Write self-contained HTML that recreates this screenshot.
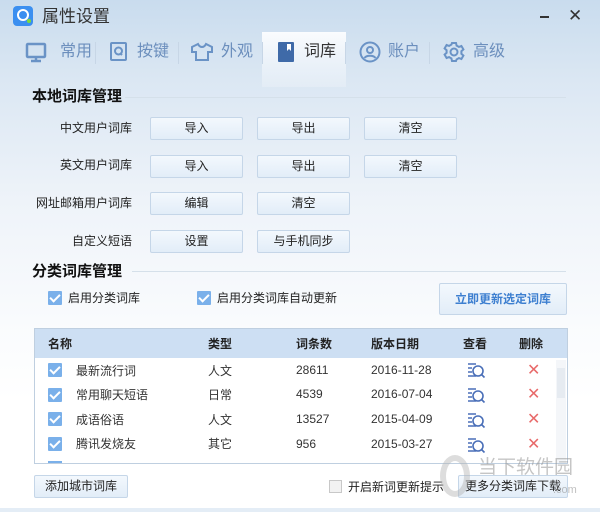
<!DOCTYPE html>
<html><head><meta charset="utf-8"><style>
*{margin:0;padding:0;box-sizing:border-box}
body{width:600px;height:512px;overflow:hidden;font-family:"Liberation Sans","Noto Sans CJK SC",sans-serif;font-size:12px;line-height:14px;color:#222;position:relative;
background:linear-gradient(180deg,#c9dcee 0px,#dbe7f3 80px,#eef3f9 200px,#f9fbfd 320px,#fff 400px)}
.a{position:absolute}
.btn{position:absolute;width:93px;height:23px;border:1px solid #c5d6e8;background:linear-gradient(#f3f8fd,#e2edf8);text-align:center;line-height:21px;font-size:12px;color:#222;border-radius:2px}
.lbl{position:absolute;right:468px;font-size:12px;color:#222}
.tab{position:absolute;top:44px;font-size:16px;line-height:16px;color:#6c8fbd}
.sep{position:absolute;top:42px;width:1px;height:22px;background:#c7d6e6}
.h{position:absolute;font-size:15px;line-height:15px;font-weight:bold;color:#111}
.cb{position:absolute;width:14px;height:14px;background:#7ab0ea;border-radius:1px}
.cb:after{content:"";position:absolute;left:4px;top:1px;width:4px;height:8px;border:solid #fff;border-width:0 2px 2px 0;transform:rotate(45deg)}
.th{position:absolute;top:337px;font-weight:bold;font-size:12px}
.td{position:absolute;font-size:12px;color:#333}
.x{position:absolute;color:#e86a6a;font-size:16px;line-height:16px;left:527px}
</style></head><body>
<div class="a" style="left:13px;top:6px;width:20px;height:20px;border-radius:4px;background:#3b8ff0"></div>
<div class="a" style="left:17px;top:9px;width:12px;height:12px;border:2.5px solid #fff;border-radius:50%"></div>
<div class="a" style="left:27px;top:19px;width:4px;height:4px;background:#7ddc3a;border-radius:50%"></div>
<div class="a" style="left:42px;top:8px;font-size:17px;line-height:17px;color:#333">属性设置</div>
<div class="a" style="left:540px;top:16px;width:9px;height:2px;background:#333"></div>
<div class="a" style="left:568px;top:7px;font-size:17px;line-height:17px;color:#333">✕</div>

<div class="a" style="left:262px;top:32px;width:84px;height:55px;background:linear-gradient(#fafcfe,rgba(255,255,255,0.2))"></div>
<svg class="a" style="left:24px;top:40px" width="24" height="24" fill="none" stroke="#6a93c6" stroke-width="2.5"><rect x="3" y="4" width="18" height="13" rx="1"/><path d="M12 17v4M7 21h10"/></svg>
<div class="tab" style="left:60px">常用</div>
<div class="sep" style="left:95px"></div>
<svg class="a" style="left:109px;top:41px" width="20" height="22" fill="none" stroke="#6a93c6" stroke-width="2"><rect x="2" y="2" width="15" height="17" rx="1"/><circle cx="9.5" cy="10" r="3.5"/><path d="M11 12l2 2"/></svg>
<div class="tab" style="left:137px">按键</div>
<div class="sep" style="left:178px"></div>
<svg class="a" style="left:190px;top:42px" width="24" height="20" fill="none" stroke="#6a93c6" stroke-width="2"><path d="M8 2L2 5v5h4v8h12v-8h4V5l-6-3c-1 2-2 3-4 3S9 4 8 2z"/></svg>
<div class="tab" style="left:221px">外观</div>
<div class="sep" style="left:262px"></div>
<svg class="a" style="left:278px;top:42px" width="16" height="20"><rect x="0" y="0" width="16" height="20" rx="1" fill="#3f6aa8"/><path d="M9 2h4v7l-2-2-2 2z" fill="#fff"/></svg>
<div class="tab" style="left:304px;color:#333">词库</div>
<div class="sep" style="left:345px"></div>
<svg class="a" style="left:359px;top:41px" width="22" height="22" fill="none" stroke="#6a93c6" stroke-width="2"><circle cx="11" cy="11" r="9.5"/><circle cx="11" cy="9" r="3"/><path d="M5.5 17c2-3 9-3 11 0"/></svg>
<div class="tab" style="left:388px">账户</div>
<div class="sep" style="left:429px"></div>
<svg class="a" style="left:443px;top:41px" width="22" height="22" fill="none" stroke="#6a93c6" stroke-width="2"><circle cx="11" cy="11" r="3.5"/><path d="M9 2h4l.6 2.6 2.3 1.3 2.5-.9 2 3.4-2 1.8v2.6l2 1.8-2 3.4-2.5-.9-2.3 1.3L13 20H9l-.6-2.6-2.3-1.3-2.5.9-2-3.4 2-1.8V9.2l-2-1.8 2-3.4 2.5.9 2.3-1.3z"/></svg>
<div class="tab" style="left:473px">高级</div>

<div class="h" style="left:32px;top:89px">本地词库管理</div>
<div class="a" style="left:125px;top:97px;width:441px;height:1px;background:#d5e0ea"></div>

<div class="lbl" style="top:121px">中文用户词库</div>
<div class="btn" style="left:150px;top:117px">导入</div><div class="btn" style="left:257px;top:117px">导出</div><div class="btn" style="left:364px;top:117px">清空</div>
<div class="lbl" style="top:158px">英文用户词库</div>
<div class="btn" style="left:150px;top:155px">导入</div><div class="btn" style="left:257px;top:155px">导出</div><div class="btn" style="left:364px;top:155px">清空</div>
<div class="lbl" style="top:196px">网址邮箱用户词库</div>
<div class="btn" style="left:150px;top:192px">编辑</div><div class="btn" style="left:257px;top:192px">清空</div>
<div class="lbl" style="top:234px">自定义短语</div>
<div class="btn" style="left:150px;top:230px">设置</div><div class="btn" style="left:257px;top:230px">与手机同步</div>

<div class="h" style="left:32px;top:264px">分类词库管理</div>
<div class="a" style="left:132px;top:271px;width:434px;height:1px;background:#d5e0ea"></div>
<div class="cb" style="left:48px;top:291px"></div><div class="a" style="left:68px;top:291px">启用分类词库</div>
<div class="cb" style="left:197px;top:291px"></div><div class="a" style="left:217px;top:291px">启用分类词库自动更新</div>
<div class="btn" style="left:439px;top:283px;width:128px;height:32px;line-height:30px;color:#3d7fd0;font-weight:bold">立即更新选定词库</div>

<div class="a" style="left:34px;top:328px;width:534px;height:136px;border:1px solid #bfcfe0;background:#fff"></div>
<div class="a" style="left:35px;top:329px;width:532px;height:29px;background:#cddff3"></div>
<div class="th" style="left:48px">名称</div><div class="th" style="left:208px">类型</div><div class="th" style="left:296px">词条数</div><div class="th" style="left:371px">版本日期</div><div class="th" style="left:463px">查看</div><div class="th" style="left:519px">删除</div>
<div class="a" style="left:556px;top:360px;width:10px;height:103px;background:#f4f6f9"></div>
<div class="a" style="left:557px;top:368px;width:8px;height:30px;background:#e6ebf1"></div>

<div class="cb" style="left:48px;top:363px"></div><div class="td" style="left:76px;top:364px">最新流行词</div><div class="td" style="left:208px;top:364px">人文</div><div class="td" style="left:296px;top:363px">28611</div><div class="td" style="left:371px;top:363px">2016-11-28</div>
<div class="cb" style="left:48px;top:388px"></div><div class="td" style="left:76px;top:388px">常用聊天短语</div><div class="td" style="left:208px;top:388px">日常</div><div class="td" style="left:296px;top:387px">4539</div><div class="td" style="left:371px;top:387px">2016-07-04</div>
<div class="cb" style="left:48px;top:412px"></div><div class="td" style="left:76px;top:413px">成语俗语</div><div class="td" style="left:208px;top:413px">人文</div><div class="td" style="left:296px;top:412px">13527</div><div class="td" style="left:371px;top:412px">2015-04-09</div>
<div class="cb" style="left:48px;top:437px"></div><div class="td" style="left:76px;top:437px">腾讯发烧友</div><div class="td" style="left:208px;top:437px">其它</div><div class="td" style="left:296px;top:437px">956</div><div class="td" style="left:371px;top:437px">2015-03-27</div>
<div class="a" style="left:48px;top:461px;width:14px;height:2px;background:#7ab0ea"></div>

<svg class="a" style="left:467px;top:362px" width="22" height="100" fill="none" stroke="#4a6fb8" stroke-width="1.6">
<g><path d="M1 2h8M1 6h4M1 10h4M1 14h8"/><circle cx="11" cy="9" r="5"/><path d="M14.5 12.5l3 3"/></g>
<g transform="translate(0,25)"><path d="M1 2h8M1 6h4M1 10h4M1 14h8"/><circle cx="11" cy="9" r="5"/><path d="M14.5 12.5l3 3"/></g>
<g transform="translate(0,50)"><path d="M1 2h8M1 6h4M1 10h4M1 14h8"/><circle cx="11" cy="9" r="5"/><path d="M14.5 12.5l3 3"/></g>
<g transform="translate(0,75)"><path d="M1 2h8M1 6h4M1 10h4M1 14h8"/><circle cx="11" cy="9" r="5"/><path d="M14.5 12.5l3 3"/></g>
</svg>
<div class="x" style="top:363px">✕</div><div class="x" style="top:387px">✕</div><div class="x" style="top:412px">✕</div><div class="x" style="top:437px">✕</div>

<div class="btn" style="left:34px;top:475px;width:94px;height:23px">添加城市词库</div>
<div class="a" style="left:329px;top:480px;width:13px;height:13px;border:1px solid #c8c8c8;background:#f2f2f2"></div>
<div class="a" style="left:348px;top:480px">开启新词更新提示</div>
<div class="btn" style="left:458px;top:475px;width:110px;height:23px">更多分类词库下载</div>
<div class="a" style="left:0;top:508px;width:600px;height:4px;background:#e4edf6"></div>
<div class="a" style="left:440px;top:455px;width:30px;height:42px;border:6px solid rgba(180,180,180,0.45);border-radius:50%"></div>
<div class="a" style="left:478px;top:458px;font-size:19px;line-height:19px;color:rgba(150,150,150,0.55)">当下软件园</div>
<div class="a" style="left:553px;top:483px;font-size:11px;color:rgba(150,150,150,0.6)">.com</div>
</body></html>
